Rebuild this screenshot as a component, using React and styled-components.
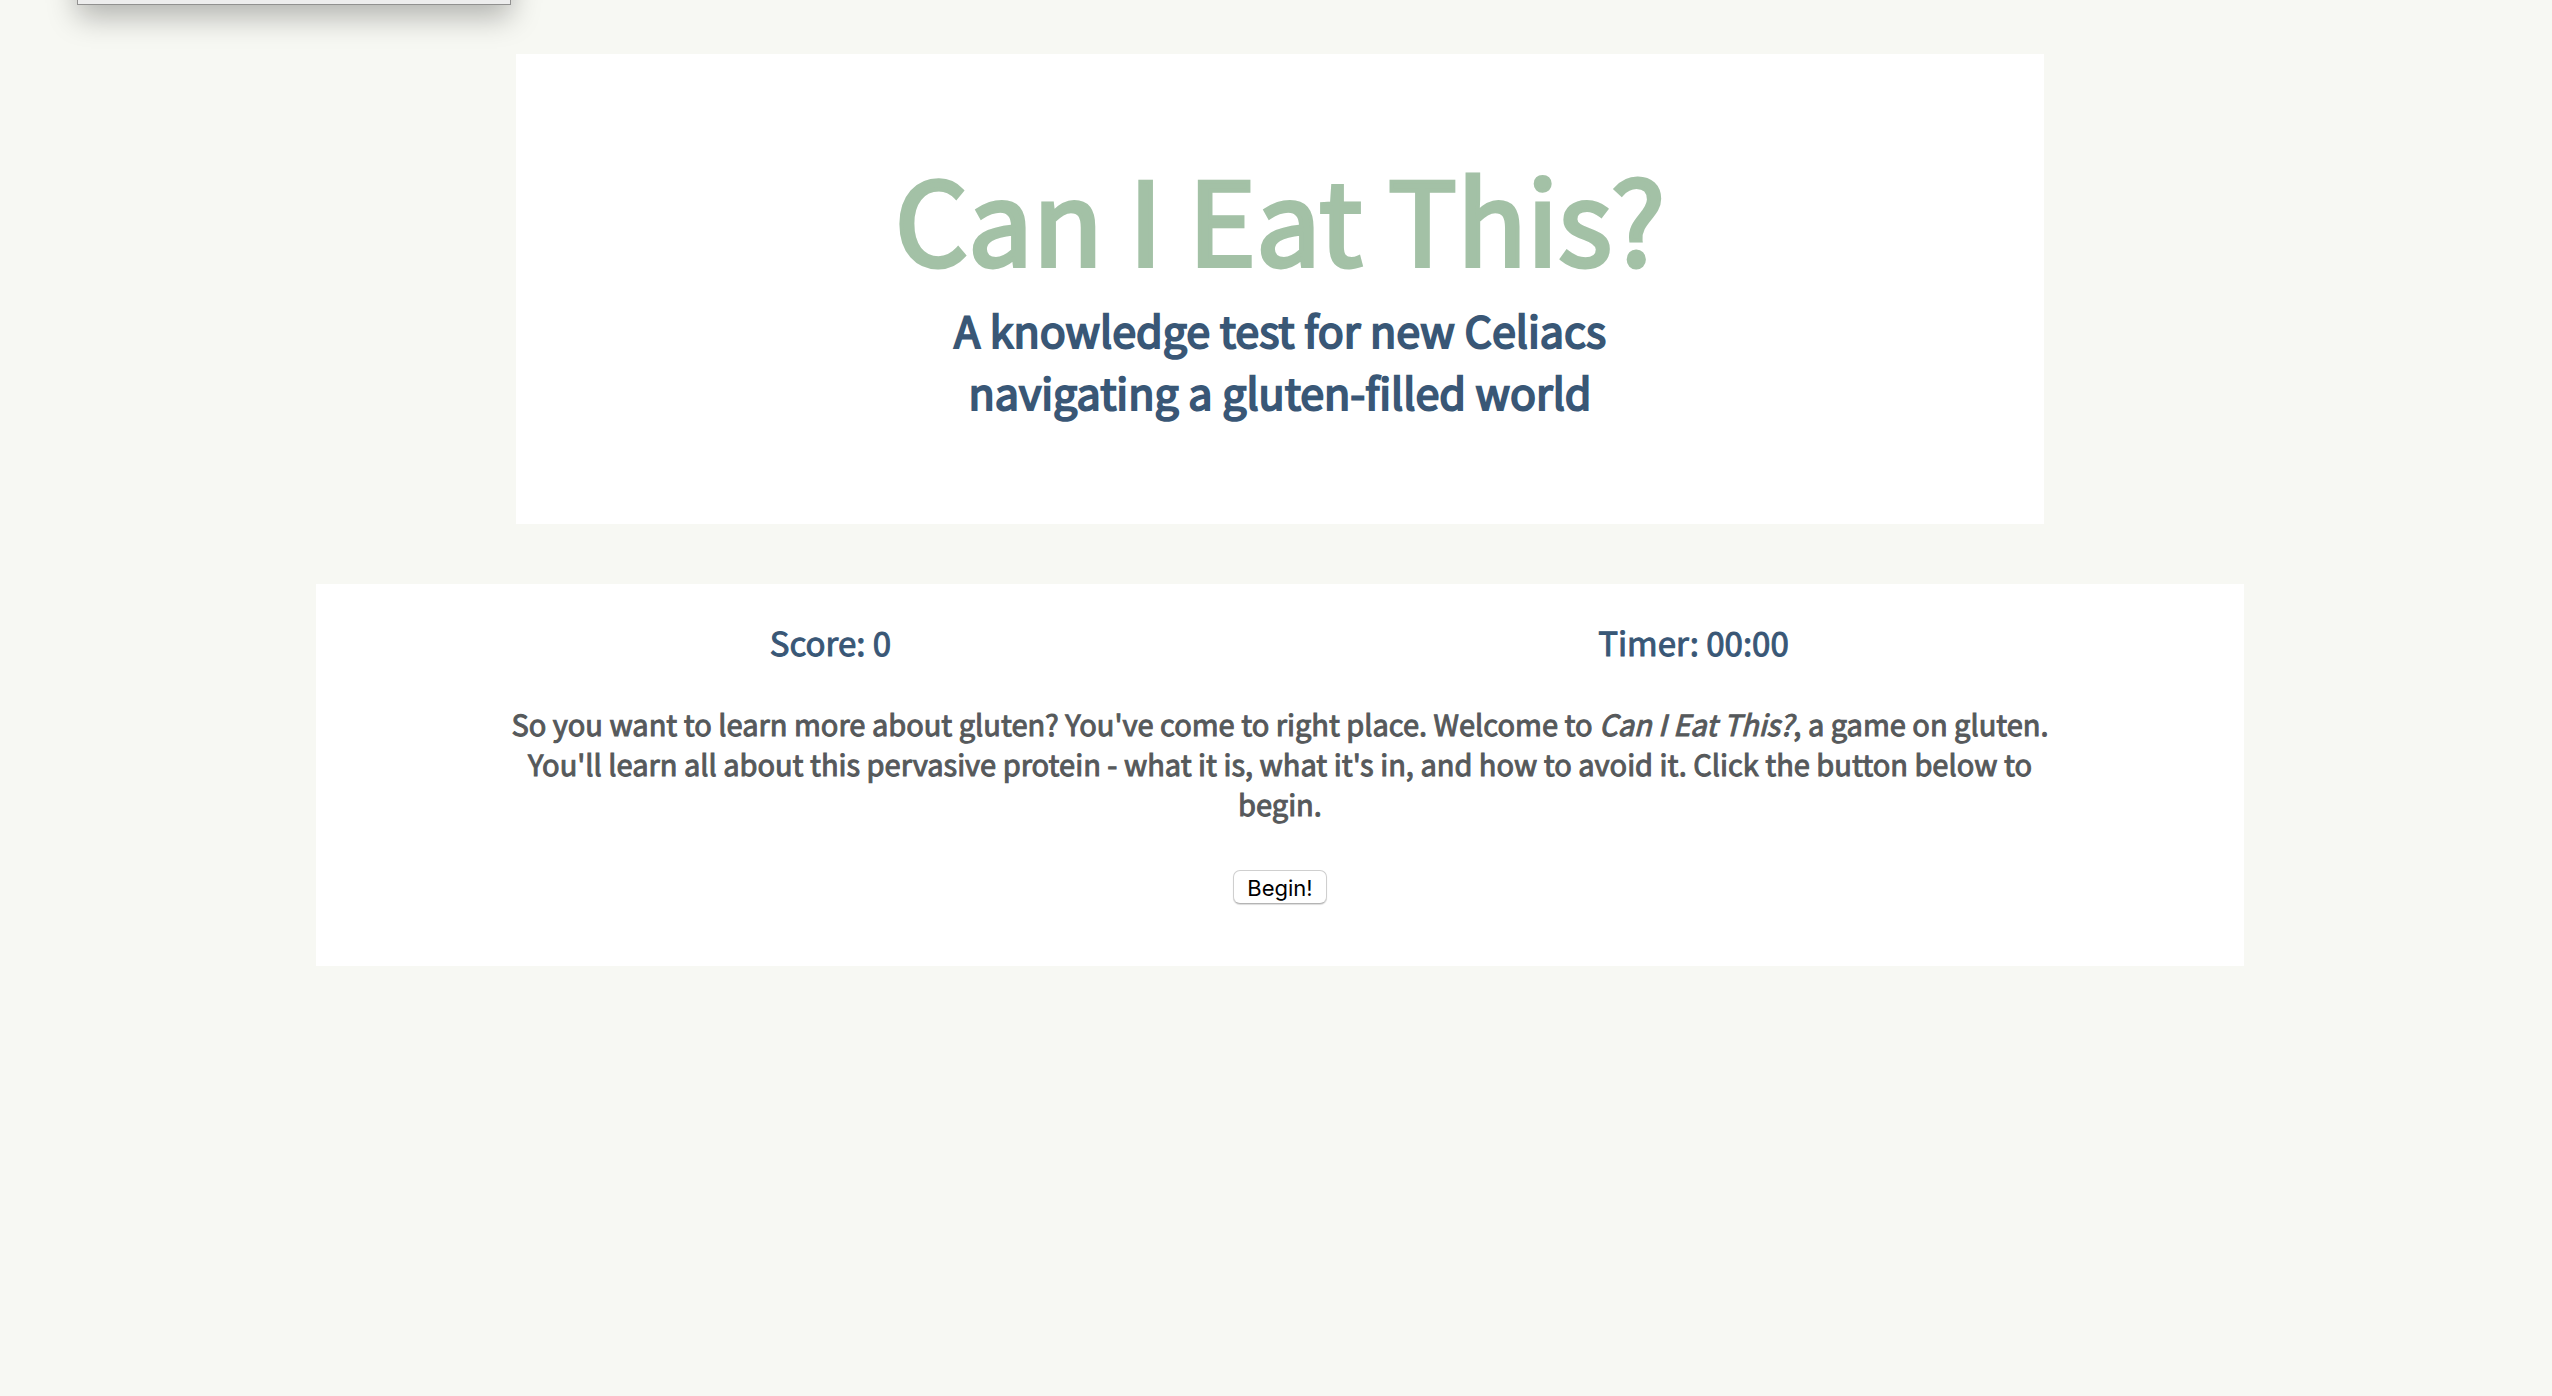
import React from "react";
import styled, { createGlobalStyle } from "styled-components";

const GlobalStyle = createGlobalStyle`
  *, *::before, *::after { box-sizing: border-box; }
  html, body { margin: 0; background: #f7f8f3; }
  body {
    font-family: "Noto Sans CJK JP", "Noto Sans CJK SC", sans-serif;
    text-rendering: geometricPrecision;
  }
`;

const Page = styled.div`
  position: relative;
  min-height: 100vh;
  overflow: hidden;
  padding: 54px 0 54px 8px;
  display: flex;
  flex-direction: column;
  align-items: center;
  gap: 60px;
  font-weight: 400;
`;

const WindowEdge = styled.div`
  position: absolute;
  top: -115px;
  left: 77px;
  width: 434px;
  height: 120px;
  background: #ededed;
  border: 1px solid #919190;
  box-shadow: 0 12px 28px rgba(0, 0, 0, 0.28);
`;

const Header = styled.header`
  width: 100%;
  max-width: 1528px;
  padding: 81px 32px 101px;
  background: #fff;
  text-align: center;
`;

const Title = styled.h1`
  margin: 0;
  font-size: 115px;
  line-height: 164px;
  font-weight: 400;
  color: #a3c1a6;
  -webkit-text-stroke: 4px #a3c1a6;
`;

const Tagline = styled.h2`
  margin: 0;
  font-size: 43px;
  line-height: 62px;
  font-weight: 400;
  color: #395776;
  -webkit-text-stroke: 2px #395776;
`;

const Game = styled.main`
  width: 100%;
  max-width: 1928px;
  padding: 35px 0 62px;
  background: #fff;
  display: flex;
  flex-direction: column;
  align-items: center;
`;

const Stats = styled.div`
  width: 100%;
  padding: 0 119px 0 83px;
  display: grid;
  grid-template-columns: 1fr 1fr;
  text-align: center;
`;

const Stat = styled.div`
  font-size: 33px;
  line-height: 46px;
  color: #395776;
  -webkit-text-stroke: 1px #395776;
`;

const Intro = styled.p`
  max-width: 1544px;
  margin: 39px 0 46px;
  font-size: 29px;
  line-height: 40px;
  text-align: center;
  color: #56595b;
  -webkit-text-stroke: 1px #56595b;
`;

const BeginButton = styled.button`
  height: 34px;
  padding: 1px 13px 0;
  border: 1px solid #cfcfcf;
  border-bottom-color: #b4b4b4;
  border-radius: 7px;
  background: #fff;
  box-shadow: 0 1px 1px rgba(0, 0, 0, 0.14);
  font-family: Inter, Roboto, sans-serif;
  font-size: 22px;
  line-height: 32px;
  color: #000;
`;

export default function App() {
  return (
    <>
      <GlobalStyle />
      <Page>
        <WindowEdge />
        <Header>
          <Title>Can I Eat This?</Title>
          <Tagline>
            A knowledge test for new Celiacs
            <br />
            navigating a gluten-filled world
          </Tagline>
        </Header>
        <Game>
          <Stats>
            <Stat>Score: 0</Stat>
            <Stat>Timer: 00:00</Stat>
          </Stats>
          <Intro>
            So you want to learn more about gluten? You've come to right place.
            Welcome to <em>Can I Eat This?</em>, a game on gluten. You'll learn
            all about this pervasive protein - what it is, what it's in, and how
            to avoid it. Click the button below to begin.
          </Intro>
          <BeginButton type="button">Begin!</BeginButton>
        </Game>
      </Page>
    </>
  );
}
